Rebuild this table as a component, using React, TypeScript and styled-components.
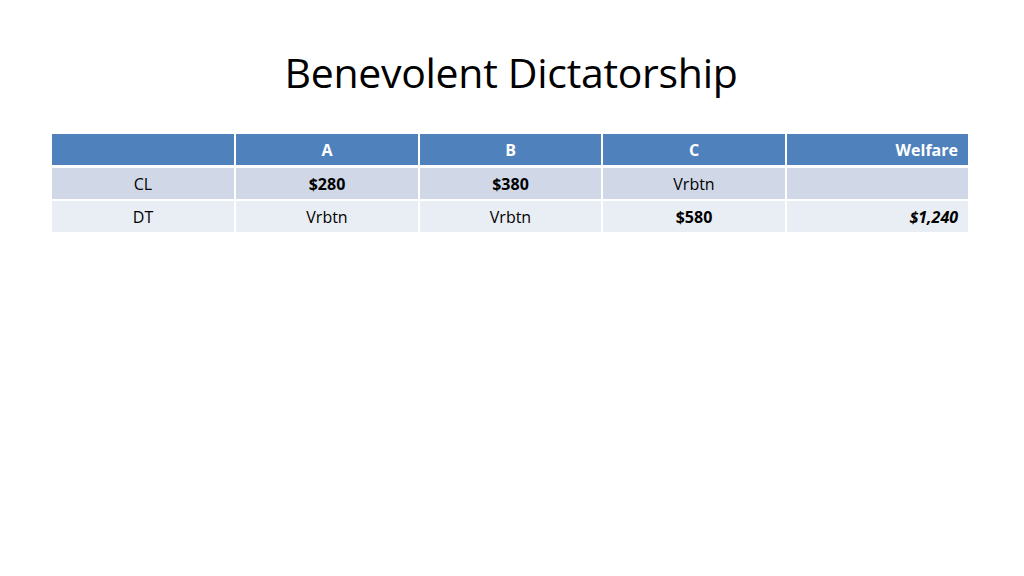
import styled, { createGlobalStyle } from 'styled-components';

const GlobalStyle = createGlobalStyle`
  html, body {
    margin: 0;
    padding: 0;
    background: #ffffff;
  }
  body {
    font-family: 'Open Sans', 'Liberation Sans', sans-serif;
  }
`;

const rows = [
  { label: 'CL', a: '$280', aBold: true, b: '$380', bBold: true, c: 'Vrbtn', cBold: false, welfare: '' },
  { label: 'DT', a: 'Vrbtn', aBold: false, b: 'Vrbtn', bBold: false, c: '$580', cBold: true, welfare: '$1,240' },
];

const COLS = '182px 184px 183px 184px 183px';

export default function App() {
  return (
    <>
      <GlobalStyle />
      <Slide>
        <Title>Benevolent Dictatorship</Title>
        <Table>
          <HeaderRow>
            <HeadCell />
            <HeadCell>A</HeadCell>
            <HeadCell>B</HeadCell>
            <HeadCell>C</HeadCell>
            <HeadCell $right>Welfare</HeadCell>
          </HeaderRow>
          {rows.map((r, i) => (
            <BodyRow key={r.label} $odd={i % 2 === 0}>
              <Cell>{r.label}</Cell>
              <Cell $bold={r.aBold}>{r.a}</Cell>
              <Cell $bold={r.bBold}>{r.b}</Cell>
              <Cell $bold={r.cBold}>{r.c}</Cell>
              <Cell $right $bold $italic>{r.welfare}</Cell>
            </BodyRow>
          ))}
        </Table>
      </Slide>
    </>
  );
}

const Slide = styled.div`
  width: 1024px;
  height: 576px;
  padding-top: 44px;
  box-sizing: border-box;
  display: flex;
  flex-direction: column;
`;

const Title = styled.h1`
  margin: 0;
  align-self: center;
  margin-left: -2px;
  font-family: 'Open Sans', sans-serif;
  font-weight: 400;
  font-size: 41px;
  line-height: 56px;
  color: #000;
  letter-spacing: -0.3px;
`;

const Table = styled.div`
  margin-top: 34px;
  margin-left: 52px;
  width: 916px;
  display: flex;
  flex-direction: column;
`;

const HeaderRow = styled.div`
  display: grid;
  grid-template-columns: ${COLS};
  background: #4f81bd;
  border-bottom: 3px solid #fff;
`;

const BodyRow = styled.div<{ $odd: boolean }>`
  display: grid;
  grid-template-columns: ${COLS};
  background: ${p => (p.$odd ? '#d0d8e8' : '#e9edf4')};
  border-bottom: 2px solid #fff;
`;

const HeadCell = styled.div<{ $right?: boolean }>`
  height: 31px;
  display: flex;
  align-items: center;
  justify-content: ${p => (p.$right ? 'flex-end' : 'center')};
  padding: 0 10px;
  border-left: 2px solid #fff;
  color: #fff;
  font-weight: 700;
  font-size: 16px;
  &:first-child {
    border-left: none;
  }
`;

const Cell = styled.div<{ $right?: boolean; $bold?: boolean; $italic?: boolean }>`
  height: 31px;
  display: flex;
  align-items: center;
  justify-content: ${p => (p.$right ? 'flex-end' : 'center')};
  padding: 0 10px;
  border-left: 2px solid #fff;
  color: #000;
  font-size: 16px;
  font-weight: ${p => (p.$bold ? 700 : 400)};
  font-style: ${p => (p.$italic ? 'italic' : 'normal')};
  &:first-child {
    border-left: none;
  }
`;
